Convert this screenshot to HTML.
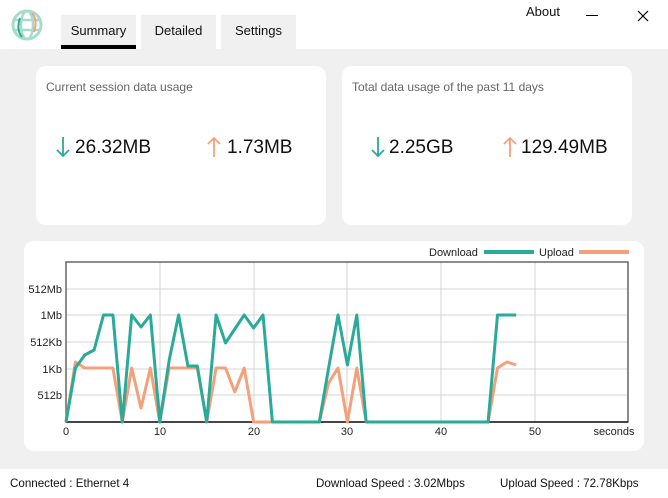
<!DOCTYPE html>
<html><head><meta charset="utf-8"><style>
body{margin:0;width:668px;height:498px;background:#f0f0f0;font-family:"Liberation Sans",sans-serif;position:relative;overflow:hidden;color:#111}
.top{position:absolute;left:0;top:0;width:668px;height:49px;background:#fff}
.tab{position:absolute;top:15px;height:34px;background:#f0f0f0;font-size:13px;text-align:center;line-height:32px}
.card{position:absolute;background:#fff;border-radius:10px}
.lbl{position:absolute;font-size:12px;color:#666}
.val{position:absolute;font-size:19px;color:#111;top:137px}
.foot{position:absolute;top:469px;height:29px;width:668px;background:#fff;font-size:11.6px}
.ar{position:absolute;top:136px}
</style></head><body>
<div class="top"></div>
<svg style="position:absolute;left:10px;top:8px" width="34" height="34" viewBox="0 0 34 34">
<circle cx="17" cy="17" r="14" fill="none" stroke="#a7dccd" stroke-width="3"/>
<ellipse cx="17" cy="17" rx="6" ry="14" fill="none" stroke="#a7dccd" stroke-width="2.5"/>
<line x1="3" y1="12" x2="31" y2="12" stroke="#a7dccd" stroke-width="2.5"/>
<line x1="3" y1="22" x2="31" y2="22" stroke="#a7dccd" stroke-width="2.5"/>
<path d="M22 5 Q28 12 24 24" fill="none" stroke="#f4a07a" stroke-width="2"/>
<path d="M12 29 Q6 22 10 10" fill="none" stroke="#2aaa99" stroke-width="2"/>
</svg>
<div class="tab" style="left:61px;width:75px">Summary</div>
<div style="position:absolute;left:61px;top:45px;width:75px;height:4px;background:#000"></div>
<div class="tab" style="left:141px;width:75px">Detailed</div>
<div class="tab" style="left:221px;width:75px">Settings</div>
<div style="position:absolute;left:526px;top:4px;font-size:13px">About</div>
<div style="position:absolute;left:586px;top:15px;width:12px;height:1px;background:#000"></div>
<svg style="position:absolute;left:637px;top:10px" width="12" height="12"><path d="M1 1L11 11M11 1L1 11" stroke="#000" stroke-width="1.2"/></svg>

<div class="card" style="left:36px;top:66px;width:290px;height:159px"></div>
<div class="lbl" style="left:46px;top:80px">Current session data usage</div>
<svg class="ar" style="left:56px" width="14" height="22"><path d="M7 1V20M1 14L7 20L13 14" fill="none" stroke="#2aaa99" stroke-width="1.8"/></svg>
<div class="val" style="left:75px">26.32MB</div>
<svg class="ar" style="left:207px" width="14" height="22"><path d="M7 21V2M1 8L7 2L13 8" fill="none" stroke="#f4a07a" stroke-width="1.8"/></svg>
<div class="val" style="left:227px">1.73MB</div>

<div class="card" style="left:342px;top:66px;width:290px;height:159px"></div>
<div class="lbl" style="left:352px;top:80px">Total data usage of the past 11 days</div>
<svg class="ar" style="left:371px" width="14" height="22"><path d="M7 1V20M1 14L7 20L13 14" fill="none" stroke="#2aaa99" stroke-width="1.8"/></svg>
<div class="val" style="left:389px">2.25GB</div>
<svg class="ar" style="left:503px" width="14" height="22"><path d="M7 21V2M1 8L7 2L13 8" fill="none" stroke="#f4a07a" stroke-width="1.8"/></svg>
<div class="val" style="left:521px">129.49MB</div>

<div class="card" style="left:24px;top:241px;width:620px;height:210px"></div>
<svg style="position:absolute;left:0;top:0" width="668" height="498" font-family="Liberation Sans, sans-serif" font-size="11">
<g stroke="#d4d4d4" stroke-width="1">
<line x1="66" y1="289" x2="628" y2="289"/><line x1="66" y1="315" x2="628" y2="315"/><line x1="66" y1="342" x2="628" y2="342"/><line x1="66" y1="369" x2="628" y2="369"/><line x1="66" y1="395" x2="628" y2="395"/>
<line x1="160" y1="262" x2="160" y2="422"/><line x1="254" y1="262" x2="254" y2="422"/><line x1="347" y1="262" x2="347" y2="422"/><line x1="441" y1="262" x2="441" y2="422"/><line x1="535" y1="262" x2="535" y2="422"/>
</g>
<rect x="66" y="262" width="562" height="160" fill="none" stroke="#666" stroke-width="1.5"/>
<line x1="66" y1="422" x2="628" y2="422" stroke="#222" stroke-width="1.5"/>
<g text-anchor="end" fill="#222"><text x="62" y="293">512Mb</text><text x="62" y="319">1Mb</text><text x="62" y="346">512Kb</text><text x="62" y="373">1Kb</text><text x="62" y="399">512b</text></g>
<g text-anchor="middle" fill="#222"><text x="66" y="435">0</text><text x="160" y="435">10</text><text x="254" y="435">20</text><text x="347" y="435">30</text><text x="441" y="435">40</text><text x="535" y="435">50</text><text x="614" y="435">seconds</text></g>
<text x="429" y="256" fill="#222">Download</text><line x1="484" y1="252" x2="534" y2="252" stroke="#2aaa99" stroke-width="4"/>
<text x="539" y="256" fill="#222">Upload</text><line x1="579" y1="252" x2="629" y2="252" stroke="#f4a07a" stroke-width="4"/>
<polyline fill="none" stroke="#f4a07a" stroke-width="3" stroke-linejoin="round" points="66,422 75.4,362 84.8,368 112.9,368 122.3,422 131.7,368 141,408 150.4,368 159.8,422 169.2,368 197.3,368 206.7,422 216.1,368 225.5,368 234.8,392 244.2,368 253.6,422 319.3,422 328.6,383 338,368 347.4,422 356.8,368 366.2,422 488.1,422 497.5,368 506.9,362 516.2,365"/>
<polyline fill="none" stroke="#2aaa99" stroke-width="3" stroke-linejoin="round" points="66,422 75.4,368 84.8,355 94.1,350 103.5,315 112.9,315 122.3,422 131.7,315 141,327 150.4,315 159.8,422 169.2,360 178.6,315 187.9,366 197.3,366 206.7,422 216.1,315 225.5,343 234.8,329 244.2,315 253.6,328 263,315 272.4,422 319.3,422 328.6,368 338,315 347.4,365 356.8,315 366.2,422 488.1,422 497.5,315 516.2,315"/>
</svg>

<div class="foot">
<span style="position:absolute;left:10px;top:8px">Connected : Ethernet 4</span>
<span style="position:absolute;left:316px;top:8px">Download Speed : 3.02Mbps</span>
<span style="position:absolute;left:500px;top:8px">Upload Speed : 72.78Kbps</span>
</div>
</body></html>
